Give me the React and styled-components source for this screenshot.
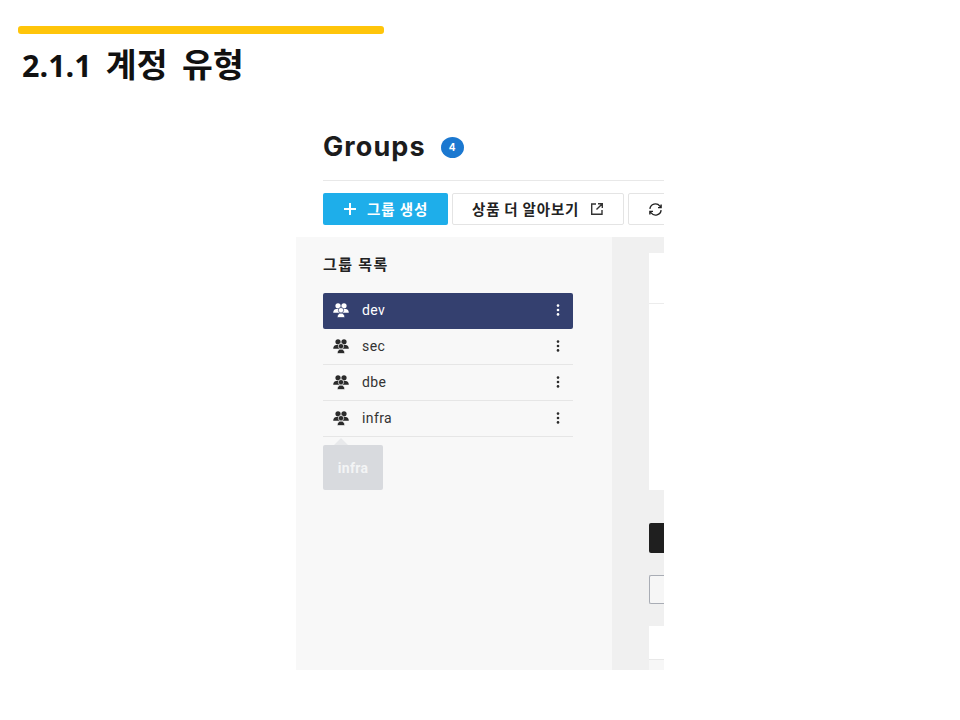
import React from "react";
import styled, { createGlobalStyle } from "styled-components";

const Global = createGlobalStyle`
  html, body { margin: 0; padding: 0; background: #fff; }
  body { font-family: "Inter", "Noto Sans CJK KR", sans-serif; }
`;
const Slide = styled.div`
  width: 960px; height: 720px; padding-top: 26px; box-sizing: border-box; overflow: hidden;
  display: flex; flex-direction: column; background: #fff;
`;
const Accent = styled.div`
  width: 366px; height: 8px; margin-left: 18px; border-radius: 3px; background: #ffc50a;
`;
const SlideTitle = styled.h1`
  margin: 8px 0 0 22px; height: 42px; font: 700 33.5px/42px "Noto Sans CJK KR", "Noto Sans", sans-serif;
  color: #111; letter-spacing: 0.3px; display: flex; align-items: baseline; gap: 14px; white-space: nowrap;
`;
const SectionNumber = styled.span`
  font: 700 30.5px/42px "Open Sans", sans-serif; letter-spacing: 0;
`;
const Shot = styled.section`
  width: 368px; height: 550px; margin: 36px 0 0 296px; overflow: hidden; display: flex; flex-direction: column;
`;
const Head = styled.header`
  height: 117px; padding: 0 0 0 27px; box-sizing: border-box; flex: none; display: flex; flex-direction: column;
`;
const TitleRow = styled.div`
  height: 60px; flex: none; display: flex; align-items: center; gap: 15px; padding-bottom: 6px; box-sizing: border-box;
`;
const Groups = styled.h2`
  margin: 0; font: 700 27px/32px "Inter", sans-serif; color: #1c1c1c; letter-spacing: 1.1px;
`;
const Count = styled.span`
  width: 23px; height: 21px; border-radius: 50%; background: #1b78d0; color: #fff;
  display: flex; align-items: center; justify-content: center; font: 700 10px/1 "Inter", sans-serif;
`;
const Rule = styled.div`
  height: 1px; background: #e8e8e8;
`;
const Tools = styled.div`
  display: flex; gap: 4px; margin-top: 12px;
`;
const PrimaryBtn = styled.div`
  width: 125px; height: 32px; flex: none; border-radius: 2px; background: #1eaeea; color: #fff;
  display: flex; align-items: center; box-sizing: border-box; padding-left: 20px; gap: 10px;
  font: 700 14.5px/1 "Noto Sans CJK KR", sans-serif; letter-spacing: .9px;
`;
const OutlineBtn = styled.div`
  width: ${p => p.$w}px; height: 32px; flex: none; box-sizing: border-box; border: 1px solid #e4e4e4; border-radius: 2px;
  background: #fff; color: #222; display: flex; align-items: center; padding-left: ${p => p.$pl}px; gap: 11px;
  font: 700 14.5px/1 "Noto Sans CJK KR", sans-serif; letter-spacing: .8px;
`;
const Body = styled.div`
  flex: 1; display: flex; min-height: 0;
`;
const Side = styled.aside`
  width: 316px; flex: none; box-sizing: border-box; padding: 15px 39px 0 27px; background: #f8f8f8;
  display: flex; flex-direction: column; position: relative;
`;
const SideTitle = styled.h3`
  margin: 0; height: 24px; font: 700 15px/24px "Noto Sans CJK KR", sans-serif; color: #222; letter-spacing: 1.4px;
`;
const List = styled.ul`
  list-style: none; margin: 17px 0 0; padding: 0;
`;
const Item = styled.li`
  height: 36px; box-sizing: border-box; display: flex; align-items: center; padding: 0 13px 1px 10px;
  border-bottom: 1px solid ${p => (p.$active ? "transparent" : "#e6e6e6")};
  background: ${p => (p.$active ? "#34406f" : "transparent")};
  border-radius: ${p => (p.$active ? "2px" : "0")};
  color: ${p => (p.$active ? "#fff" : "#333")};
  font: 400 14px/1 "Roboto", sans-serif; letter-spacing: .4px;
`;
const Name = styled.span`
  margin-left: 13px; flex: 1;
`;
const Tip = styled.div`
  position: relative; width: 60px; height: 45px; margin-top: 8px; border-radius: 2px; background: #d8dade;
  color: #f3f4f5; display: flex; align-items: center; justify-content: center;
  font: 700 14px/1 "Roboto", sans-serif; letter-spacing: .3px;
  &::before {
    content: ""; position: absolute; left: 11px; top: -7px; border: 7px solid transparent; border-top: 0;
    border-bottom-color: #e8e9eb;
  }
`;
const Main = styled.div`
  flex: 1; min-width: 0; background: #f0f0f0; padding: 16px 0 0 37px; display: flex; flex-direction: column;
`;
const Card = styled.div`
  height: 237px; flex: none; background: #fff; display: flex; flex-direction: column;
`;
const CardHead = styled.div`
  height: 50px; flex: none; border-bottom: 1px solid #ececec;
`;
const DarkBar = styled.div`
  height: 30px; flex: none; margin-top: 33px; background: #1f1f1f; border-radius: 2px 0 0 2px;
`;
const Input = styled.div`
  height: 29px; flex: none; box-sizing: border-box; margin-top: 22px; border: 1px solid #a9adb5; border-right: 0;
  border-radius: 2px 0 0 2px; background: #f6f6f6;
`;
const Lower = styled.div`
  flex: 1; margin-top: 22px; background: #fff; display: flex; flex-direction: column; justify-content: flex-end;
`;
const LowerFoot = styled.div`
  height: 10px; background: #f7f7f7; border-top: 1px solid #e8e8e8;
`;

const GroupIcon = ({ c, bg }) => (
  <svg width="16" height="15" viewBox="0 0 16 15" fill={c} aria-hidden="true">
    <circle cx="5" cy="2.8" r="2.6" />
    <circle cx="11" cy="2.8" r="2.6" />
    <path d="M0.2 9.8c0-2.4 1.4-3.8 3-3.8h9.6c1.6 0 3 1.4 3 3.8z" />
    <path d="M4.2 14.6c0-2.8 1.6-4.6 3.8-4.6s3.8 1.8 3.8 4.6z" stroke={bg} strokeWidth=".7" />
    <circle cx="8" cy="7.2" r="2.7" stroke={bg} strokeWidth=".7" />
  </svg>
);
const Dots = ({ c }) => (
  <svg width="4" height="12" viewBox="0 0 4 12" fill={c} aria-hidden="true">
    <circle cx="2" cy="1.6" r="1.3" /><circle cx="2" cy="6" r="1.3" /><circle cx="2" cy="10.4" r="1.3" />
  </svg>
);
const Plus = () => (
  <svg width="14" height="14" viewBox="0 0 14 14" stroke="#fff" strokeWidth="2" aria-hidden="true">
    <path d="M7 1v12M1 7h12" />
  </svg>
);
const External = () => (
  <svg width="14" height="14" viewBox="0 0 14 14" fill="none" stroke="#333" strokeWidth="1.4" aria-hidden="true">
    <path d="M6 2H1.7v10.3H12V8M8 1.7h4.3V6M12.3 1.7 6.5 7.5" />
  </svg>
);
const Refresh = () => (
  <svg width="15" height="15" viewBox="0 0 24 24" fill="none" stroke="#222" strokeWidth="2.2" aria-hidden="true">
    <path d="M3 11a9 9 0 0 1 16-4.5L21 9M21 13a9 9 0 0 1-16 4.5L3 15M21 4v5h-5M3 20v-5h5" />
  </svg>
);

const items = ["dev", "sec", "dbe", "infra"];

export default function App() {
  return (
    <Slide>
      <Global />
      <Accent />
      <SlideTitle><SectionNumber>2.1.1</SectionNumber><span>계정</span><span>유형</span></SlideTitle>
      <Shot>
        <Head>
          <TitleRow>
            <Groups>Groups</Groups>
            <Count>4</Count>
          </TitleRow>
          <Rule />
          <Tools>
            <PrimaryBtn><Plus />그룹 생성</PrimaryBtn>
            <OutlineBtn $w={172} $pl={19}>상품 더 알아보기<External /></OutlineBtn>
            <OutlineBtn $w={60} $pl={19}><Refresh /></OutlineBtn>
          </Tools>
        </Head>
        <Body>
          <Side>
            <SideTitle>그룹 목록</SideTitle>
            <List>
              {items.map((n, i) => (
                <Item key={n} $active={i === 0}>
                  <GroupIcon c={i === 0 ? "#fff" : "#2b2b2b"} bg={i === 0 ? "#34406f" : "#f8f8f8"} />
                  <Name>{n}</Name>
                  <Dots c={i === 0 ? "#fff" : "#2b2b2b"} />
                </Item>
              ))}
            </List>
            <Tip>infra</Tip>
          </Side>
          <Main>
            <Card><CardHead /></Card>
            <DarkBar />
            <Input />
            <Lower><LowerFoot /></Lower>
          </Main>
        </Body>
      </Shot>
    </Slide>
  );
}
